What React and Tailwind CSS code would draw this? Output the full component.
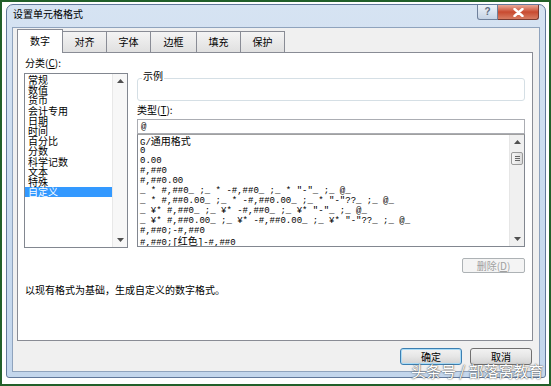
import React from "react";

const CATEGORIES = ["常规", "数值", "货币", "会计专用", "日期", "时间", "百分比", "分数", "科学记数", "文本", "特殊", "自定义"];

const FORMATS = [
  "G/通用格式",
  "0",
  "0.00",
  "#,##0",
  "#,##0.00",
  '_ * #,##0_ ;_ * -#,##0_ ;_ * "-"_ ;_ @_',
  '_ * #,##0.00_ ;_ * -#,##0.00_ ;_ * "-"??_ ;_ @_',
  '_ ¥* #,##0_ ;_ ¥* -#,##0_ ;_ ¥* "-"_ ;_ @_',
  '_ ¥* #,##0.00_ ;_ ¥* -#,##0.00_ ;_ ¥* "-"??_ ;_ @_',
  "#,##0;-#,##0",
  "#,##0;[红色]-#,##0",
];

const TABS = [
  { label: "数字", w: "w-[46px]" },
  { label: "对齐", w: "w-[45px]" },
  { label: "字体", w: "w-[45px]" },
  { label: "边框", w: "w-[47px]" },
  { label: "填充", w: "w-[45px]" },
  { label: "保护", w: "w-[45px]" },
];

function Arrow({ down }) {
  return (
    <svg width="7" height="4" viewBox="0 0 7 4">
      <path d={down ? "M0 0h7L3.5 4z" : "M0 4h7L3.5 0z"} fill="#505050" />
    </svg>
  );
}

export default function App() {
  return (
    <div className="relative w-[551px] h-[386px] bg-white border-2 border-[#22602a] overflow-hidden font-['Noto_Sans_CJK_SC','Liberation_Sans',sans-serif] text-[10px] leading-[12px] text-black">
      <div className="ml-[4px] mt-[2px] w-[540px] h-[374px] rounded-t-[7px] rounded-b-[3px] border border-[#61789a] bg-gradient-to-b from-[#d6e3f2] via-[#c9dbef] to-[#c3d6ec] px-[5px] pb-[5px] flex flex-col">
        {/* title bar */}
        <div className="h-[22px] flex items-start justify-between shrink-0">
          <span className="mt-[3px] ml-[1px]">设置单元格格式</span>
          <div className="flex mr-[1px]">
            <div className="w-[21px] h-[15px] rounded-bl-[3px] border border-t-0 border-[#6f819c] bg-gradient-to-b from-[#eef3f9] to-[#c5d3e5] flex items-center justify-center text-[10px] text-[#5d6b80] font-['Liberation_Sans',sans-serif] font-bold">
              ?
            </div>
            <div className="w-[41px] h-[15px] rounded-br-[3px] border border-t-0 border-l-0 border-[#7a3a30] bg-gradient-to-b from-[#e8a898] via-[#c84a30] to-[#d77c62] flex items-center justify-center">
              <svg width="11" height="9" viewBox="0 0 11 9">
                <path d="M1.5 1l8 7M9.5 1l-8 7" stroke="#fff" strokeWidth="2.4" strokeLinecap="round" />
              </svg>
            </div>
          </div>
        </div>

        {/* dialog body */}
        <div className="flex-1 bg-[#f0f0f0] border border-[#8fa3bd] pl-[4px] pr-[6px] flex flex-col">
          <div className="h-[23px] mt-[1px] flex items-end">
            {TABS.map((t, i) =>
              i === 0 ? (
                <div key={t.label} className={`${t.w} h-[24px] -mb-px relative z-10 bg-white border border-b-0 border-[#898c95] flex items-center justify-center pb-[2px]`}>
                  {t.label}
                </div>
              ) : (
                <div key={t.label} className={`${t.w} h-[21px] -ml-px border border-b-0 border-[#898c95] bg-gradient-to-b from-[#f4f4f4] to-[#e0e0e0] flex items-center justify-center`}>
                  {t.label}
                </div>
              )
            )}
          </div>

          {/* tab panel */}
          <div className="h-[289px] bg-white border border-[#898c95] pl-[6px] pr-[7px]">
            <div className="flex h-[220px]">
              {/* category */}
              <div className="w-[104px] flex flex-col">
                <div className="mt-[4px] ml-[1px]">分类(<span className="underline">C</span>):</div>
                <div className="mt-[4px] h-[175px] border border-[#828790] flex">
                  <div className="flex-1 pt-[1px] leading-[10.2px]">
                    {CATEGORIES.map((c) => (
                      <div
                        key={c}
                        className={c === "自定义" ? "bg-[#3399ff] text-white pl-[3px] h-[10.2px]" : "pl-[3px] h-[10.2px]"}
                      >
                        {c}
                      </div>
                    ))}
                  </div>
                  <div className="w-[15px] bg-[#f7f7f7] border-l border-[#e8e8e8] flex flex-col items-center justify-between py-[5px]">
                    <Arrow />
                    <Arrow down />
                  </div>
                </div>
              </div>

              {/* type */}
              <div className="ml-[9px] w-[388px] flex flex-col">
                <div className="relative mt-[25px] h-[23px] border border-[#d5dfe5] rounded-[3px]">
                  <span className="absolute left-[4px] -top-[9px] bg-white px-[1px]">示例</span>
                </div>
                <div className="mt-[3px]">类型(<span className="underline">T</span>):</div>
                <div className="mt-[3px] h-[15px] border border-[#abadb3] pl-[3px] flex items-center font-['Liberation_Mono',monospace] text-[9px]">
                  @
                </div>
                <div className="h-[113px] border border-[#828790] border-t-[#a0a0a0] flex">
                  <div className="flex-1 pt-[1px] pl-[2px] font-['Liberation_Mono','Noto_Sans_CJK_SC',monospace] text-[9px] leading-[10px] whitespace-pre overflow-hidden">
                    {FORMATS.map((f) => (
                      <div key={f} className="h-[10px]">
                        {f.split(/([\u4e00-\u9fff]+)/).map((part, k) =>
                          /[\u4e00-\u9fff]/.test(part) ? (
                            <span key={k} className="font-['Noto_Sans_CJK_SC',sans-serif] text-[10px]">{part}</span>
                          ) : (
                            <span key={k}>{part}</span>
                          )
                        )}
                      </div>
                    ))}
                  </div>
                  <div className="w-[15px] bg-[#f0f0f0] border-l border-[#e6e6e6] flex flex-col items-center py-[5px]">
                    <Arrow />
                    <div className="mt-[8px] w-[12px] h-[13px] rounded-[2px] border border-[#9a9a9a] bg-gradient-to-r from-[#f5f5f5] to-[#dcdcdc] flex flex-col items-center justify-center gap-[1px]">
                      <div className="w-[5px] h-px bg-[#666]" />
                      <div className="w-[5px] h-px bg-[#666]" />
                      <div className="w-[5px] h-px bg-[#666]" />
                    </div>
                    <div className="flex-1" />
                    <Arrow down />
                  </div>
                </div>
                <div className="mt-[11px] self-end w-[63px] h-[15px] rounded-[2px] border border-[#adb2b5] bg-[#f4f4f4] flex items-center justify-center text-[#a0a0a0]">
                  删除(<span className="underline">D</span>)
                </div>
              </div>
            </div>
            <div className="mt-[11px] ml-[1px]">以现有格式为基础，生成自定义的数字格式。</div>
          </div>

          {/* footer */}
          <div className="mt-[7px] flex justify-end gap-[8px] pr-[1px]">
            <div className="w-[62px] h-[17px] rounded-[3px] border border-[#3c7fb1] bg-gradient-to-b from-[#f2f2f2] via-[#e6e6e6] to-[#d3d3d3] shadow-[inset_0_0_0_1px_#a9dbf6] flex items-center justify-center">
              确定
            </div>
            <div className="w-[62px] h-[17px] rounded-[3px] border border-[#707070] bg-gradient-to-b from-[#f2f2f2] via-[#e6e6e6] to-[#d3d3d3] flex items-center justify-center">
              取消
            </div>
          </div>
        </div>
      </div>

      {/* watermark */}
      <div className="absolute left-[409px] top-[360px] text-[15px] leading-[18px] text-white whitespace-nowrap [text-shadow:0_0_1px_#444,0_0_2px_#666]">
        头条号 / 部落窝教育
      </div>
    </div>
  );
}
